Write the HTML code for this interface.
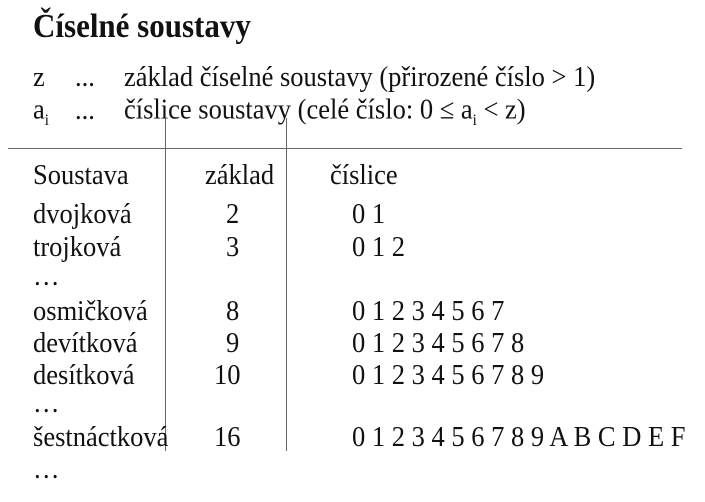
<!DOCTYPE html>
<html><head><meta charset="utf-8"><style>
body{margin:0;width:705px;height:502px;background:#fff;position:relative;overflow:hidden;font-family:"Liberation Serif",serif;color:#111}
.t{position:absolute;white-space:nowrap;font-size:26.5px;line-height:1;transform:scaleY(1.08);transform-origin:0 85%}
.l{position:absolute;background:#666}
sub{font-size:15px;vertical-align:-6px}
</style></head><body>
<div class="t" style="left:33px;top:11px;font-size:31px;font-weight:bold">Číselné soustavy</div>
<div class="t" style="left:33px;top:64px">z</div>
<div class="t" style="left:75px;top:64px">...</div>
<div class="t" style="left:124px;top:64px">základ číselné soustavy (přirozené číslo &gt; 1)</div>
<div class="t" style="left:33px;top:97px">a<sub>i</sub></div>
<div class="t" style="left:75px;top:97px">...</div>
<div class="t" style="left:124px;top:97px">číslice soustavy (celé číslo: 0 ≤ a<sub>i</sub> &lt; z)</div>
<div class="l" style="left:8px;top:148px;width:674px;height:1px"></div>
<div class="l" style="left:165px;top:118px;width:1px;height:333px"></div>
<div class="l" style="left:286px;top:118px;width:1px;height:333px"></div>
<div class="t" style="left:33px;top:162px">Soustava</div>
<div class="t" style="left:205px;top:162px">základ</div>
<div class="t" style="left:330px;top:162px">číslice</div>

<div class="t" style="left:33px;top:201px">dvojková</div>
<div class="t" style="left:226px;top:201px">2</div>
<div class="t" style="left:352px;top:201px">0 1</div>
<div class="t" style="left:33px;top:234px">trojková</div>
<div class="t" style="left:226px;top:234px">3</div>
<div class="t" style="left:352px;top:234px">0 1 2</div>
<div class="t" style="left:33px;top:263px">…</div>
<div class="t" style="left:33px;top:298px">osmičková</div>
<div class="t" style="left:226px;top:298px">8</div>
<div class="t" style="left:352px;top:298px">0 1 2 3 4 5 6 7</div>
<div class="t" style="left:33px;top:330px">devítková</div>
<div class="t" style="left:226px;top:330px">9</div>
<div class="t" style="left:352px;top:330px">0 1 2 3 4 5 6 7 8</div>
<div class="t" style="left:33px;top:362px">desítková</div>
<div class="t" style="left:214px;top:362px">10</div>
<div class="t" style="left:352px;top:362px">0 1 2 3 4 5 6 7 8 9</div>
<div class="t" style="left:33px;top:390px">…</div>
<div class="t" style="left:33px;top:424px">šestnáctková</div>
<div class="t" style="left:214px;top:424px">16</div>
<div class="t" style="left:352px;top:424px">0 1 2 3 4 5 6 7 8 9 A B C D E F</div>
<div class="t" style="left:33px;top:456px">…</div>
</body></html>
